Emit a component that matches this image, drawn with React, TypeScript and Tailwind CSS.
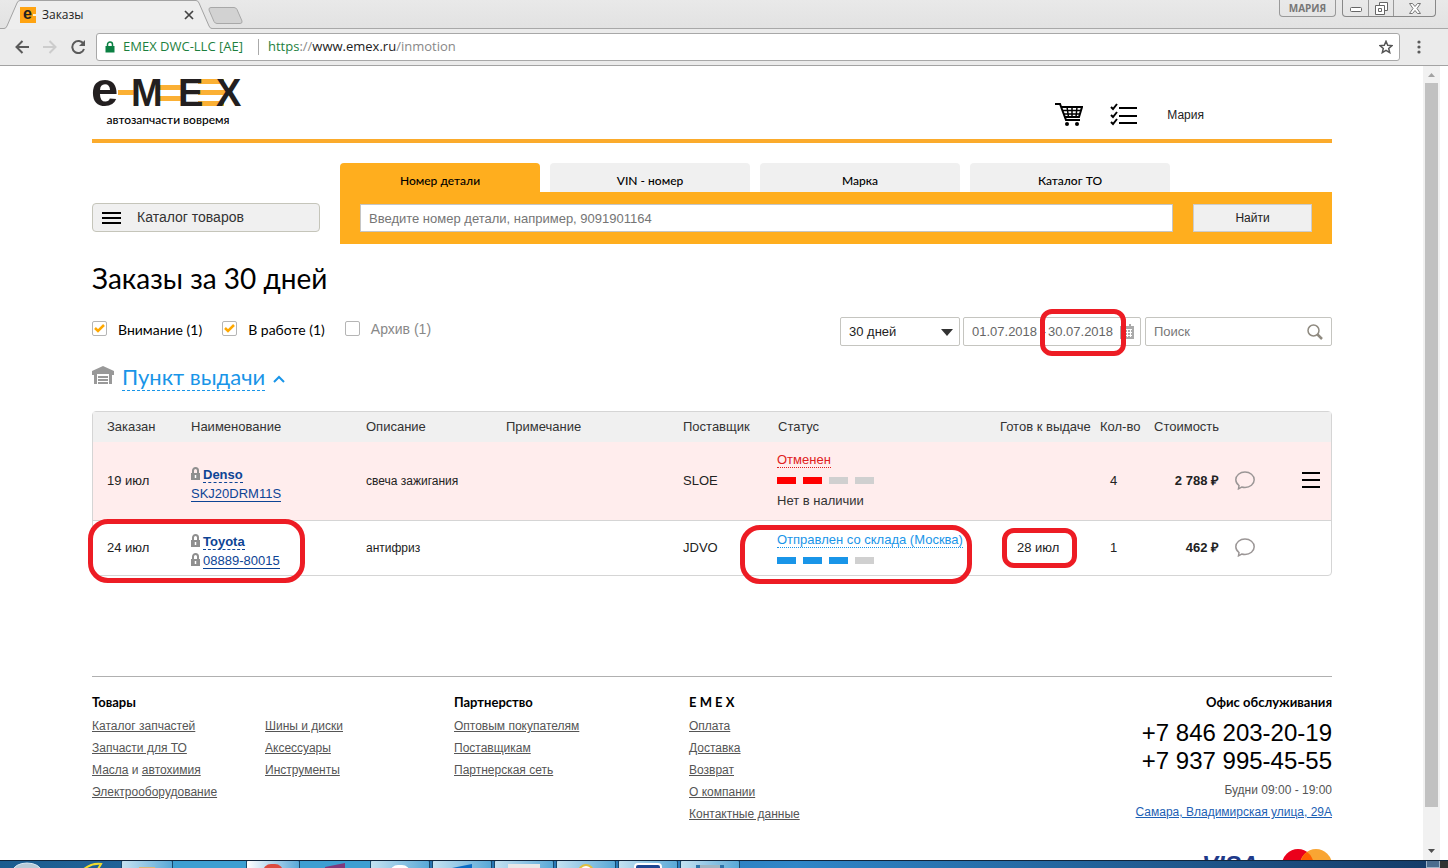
import type { ReactNode } from "react";

type Order = {
  date: string;
  brand: string;
  article: string;
  articleLocked: boolean;
  description: string;
  supplier: string;
  status: string;
  steps: number;
  comment?: string;
  canceled: boolean;
  ready: string;
  count: number;
  price: string;
};

const orders: Order[] = [
  {
    date: "19 июл",
    brand: "Denso",
    article: "SKJ20DRM11S",
    articleLocked: false,
    description: "свеча зажигания",
    supplier: "SLOE",
    status: "Отменен",
    steps: 2,
    comment: "Нет в наличии",
    canceled: true,
    ready: "",
    count: 4,
    price: "2 788 ₽",
  },
  {
    date: "24 июл",
    brand: "Toyota",
    article: "08889-80015",
    articleLocked: true,
    description: "антифриз",
    supplier: "JDVO",
    status: "Отправлен со склада (Москва)",
    steps: 3,
    canceled: false,
    ready: "28 июл",
    count: 1,
    price: "462 ₽",
  },
];

const marker =
  "pointer-events-none absolute border-[5px] border-[#ed1c24]";

function Tab() {
  return (
    <div className="relative flex h-[29px] w-[212px] items-center pl-5 pr-[18px]">
      <svg className="absolute inset-0" width="212" height="29" fill="none">
        <path d="M0 28.5H4Q6 28.5 7 26L17 3Q18 .5 20 .5H196Q198 .5 199 3L209 26Q210 28.5 212 28.5V29H0Z" fill="#eeeeee" />
        <path d="M0 28.5H4Q6 28.5 7 26L17 3Q18 .5 20 .5H196Q198 .5 199 3L209 26Q210 28.5 212 28.5" stroke="#a3a3a3" />
      </svg>
      <svg className="relative overflow-visible" width="16" height="16" viewBox="0 0 16 16">
        <rect width="16" height="16" fill="#ffa412" />
        <text x="3" y="12" fontFamily="Liberation Sans" fontWeight="bold" fontSize="16" fill="#222">e</text>
        <path d="M13 7h3v2h-3z" fill="#fff3d0" />
      </svg>
      <span className="relative ml-[6px] grow text-[12px] text-[#222]">Заказы</span>
      <button aria-label="Закрыть вкладку" className="relative">
        <svg width="10" height="10" viewBox="0 0 10 10" stroke="#444" strokeWidth="1.700">
          <path d="M1 1l8 8M9 1l-8 8" />
        </svg>
      </button>
    </div>
  );
}

function Browser() {
  return (
    <header className="shrink-0 bg-[#ebebeb] font-['Open_Sans','Noto_Sans',sans-serif]">
      <div className="flex h-[29px] items-start border-b border-[#a8a8a8] bg-linear-to-b from-[#e9e9e9] to-[#e2e2e2]">
        <Tab />
        <button aria-label="Новая вкладка" className="-ml-1 mt-[7px]">
          <svg width="36" height="17" fill="#d2d2d2" stroke="#a8a8a8">
            <path d="M3 .5H26Q28 .5 29 2.500L34 14Q34.500 16.500 32 16.500H9Q7 16.500 6 14.500L1 3Q.5.5 3 .5Z" />
          </svg>
        </button>
        <div className="ml-auto flex h-[17px] items-center text-[#666]">
          <button className="mr-[6px] h-[17px] w-[57px] rounded-b border border-t-0 border-[#999] text-[10px] font-bold leading-4 text-[#777]">
            МАРИЯ
          </button>
          <div className="mr-3 flex h-[17px] rounded-b border border-t-0 border-[#888]">
            <button aria-label="Свернуть" className="flex w-[25px] items-center justify-center">
              <svg width="12" height="10" fill="#fff" stroke="#666"><rect x=".5" y="4.500" width="11" height="4" rx="1" /></svg>
            </button>
            <button aria-label="Развернуть" className="flex w-[26px] items-center justify-center border-x border-[#999]">
              <svg width="13" height="13" fill="#fff" stroke="#666">
                <path d="M4.500.5h8v8h-8z" /><path d="M.5 3.500h9v9h-9z" /><path d="M3.500 6.500h3v3h-3z" />
              </svg>
            </button>
            <button aria-label="Закрыть" className="flex w-[41px] items-center justify-center">
              <svg width="12" height="11" fill="#fff" stroke="#777">
                <path d="M.5.5h3L6 3.500 8.500.5h3L8 5.500l3.500 5h-3L6 7.500l-2.500 3h-3l3.500-5z" />
              </svg>
            </button>
          </div>
        </div>
      </div>
      <div className="flex h-[37px] items-center border-b border-[#a3a3a3] pb-px">
        <div className="flex w-24 shrink-0 items-center gap-[14px] pl-[15px]">
          <button aria-label="Назад">
            <svg width="14" height="14" fill="none" stroke="#5a5a5a" strokeWidth="2"><path d="M14 7H1.500M7.500 1L1.500 7l6 6" /></svg>
          </button>
          <button aria-label="Вперед">
            <svg width="14" height="14" fill="none" stroke="#cccccc" strokeWidth="2"><path d="M0 7h12.500M6.500 1l6 6-6 6" /></svg>
          </button>
          <button aria-label="Обновить">
            <svg width="15" height="14" fill="none" stroke="#5a5a5a" strokeWidth="2">
              <path d="M12.500 4A6 6 0 1 0 13 9" /><path d="M14 0v6H8z" fill="#5a5a5a" stroke="none" />
            </svg>
          </button>
        </div>
        <div className="flex h-7 grow items-center rounded-[3px] border border-[#a8a8a8] bg-white pl-2 pr-1.5 text-[13px]">
          <svg width="10" height="12" fill="none" stroke="#0b8043" strokeWidth="1.500">
            <path d="M2.500 5V3.500a2.500 2.500 0 0 1 5 0V5" /><path d="M.5 5h9v6.500h-9z" fill="#0b8043" stroke="none" />
          </svg>
          <span className="ml-2 w-[126px] whitespace-nowrap text-[#1d7f3e]">EMEX DWC-LLC [AE]</span>
          <span className="mx-[9px] h-4 w-px bg-[#aaa]" />
          <span className="grow whitespace-nowrap text-[#888]">
            <span className="text-[#1d7f3e]">https</span>://<span className="text-[#222]">www.emex.ru</span>/inmotion
          </span>
          <button aria-label="Добавить в закладки">
            <svg width="14" height="14" viewBox="0 0 14 14" fill="none" stroke="#555" strokeWidth="1.500">
              <path d="M7 1.300l1.700 3.900 4.200.4-3.200 2.800 1 4.200L7 10.400l-3.700 2.200 1-4.200L1.100 5.600l4.200-.4z" />
            </svg>
          </button>
        </div>
        <button aria-label="Меню" className="flex w-12 shrink-0 justify-start pl-[17px]">
          <svg width="4" height="14" fill="#5a5a5a"><circle cx="2" cy="2" r="1.600" /><circle cx="2" cy="7" r="1.600" /><circle cx="2" cy="12" r="1.600" /></svg>
        </button>
      </div>
    </header>
  );
}

function Logo() {
  return (
    <a href="#" className="block w-[152px] pt-[13px] text-black">
      <svg className="overflow-visible" width="152" height="29" viewBox="0 0 152 29" fontFamily="Liberation Sans" fontWeight="bold" fill="#231f20">
        <path d="M26 11h18v5H26zM66 6h24v5H66zM66 17h24v5H66zM106 0h26v5h-26zM106 11h32v5h-32zM106 22h26v5h-26z" fill="#fbb034" />
        <text x="-1" y="27" fontSize="49">e</text>
        <text x="39" y="27" fontSize="38">M</text>
        <text x="86" y="27" fontSize="38">E</text>
        <text x="124" y="27" fontSize="38">X</text>
      </svg>
      <span className="mt-1 block text-center font-['Lato',sans-serif] text-[12px] font-medium leading-4">
        автозапчасти вовремя
      </span>
    </a>
  );
}

function SiteHeader() {
  return (
    <div className="flex h-[77px] border-b-4 border-[#fbab2c]">
      <Logo />
      <div className="ml-auto mr-32 flex items-center pt-6">
        <a href="#" aria-label="Корзина">
          <svg width="28" height="26" fill="none" stroke="#000" strokeWidth="2">
            <path d="M0 2h5l6 16h14" /><path d="M6 5h21l-3 10H9.500" /><path d="M7.500 8.500H26M9 12h16M12 5l1.500 10M17 5v10M22 5l-1 10" strokeWidth="1.500" />
            <circle cx="12" cy="22" r="2" fill="#000" stroke="none" /><circle cx="22" cy="22" r="2" fill="#000" stroke="none" />
          </svg>
        </a>
        <a href="#" aria-label="Список" className="ml-[27px]">
          <svg width="28" height="24" fill="none" stroke="#000" strokeWidth="2">
            <path d="M9 5h18M9 13h18M9 20h18" /><path d="M1 4l2 2 4-5M1 12l2 2 4-5M1 19l2 2 4-5" />
          </svg>
        </a>
        <a href="#" className="ml-[29px] text-[12px] text-[#222]">Мария</a>
      </div>
    </div>
  );
}

function PartSearch() {
  const tabs = ["Номер детали", "VIN - номер", "Марка", "Каталог ТО"];
  return (
    <div className="mt-5 flex items-end gap-5">
      <button className="mb-3 flex h-[29px] w-[228px] shrink-0 items-center gap-[15px] rounded border border-[#c5c5ba] bg-[#f0f0f0] pl-[9px] text-[14px] text-[#333]">
        <svg width="20" height="12" stroke="#000" strokeWidth="2"><path d="M0 1h19M0 6h19M0 11h19" /></svg>
        Каталог товаров
      </button>
      <div className="grow">
        <div className="flex gap-[10px] font-['Lato',sans-serif] text-[12px]">
          {tabs.map((tab, i) => (
            <button
              key={tab}
              className={`h-[29px] w-[200px] rounded-t pt-1.5 font-medium ${i === 0 ? "bg-[#ffae1e]" : "bg-[#f0f0f0]"}`}
            >
              {tab}
            </button>
          ))}
        </div>
        <form className="flex gap-5 bg-[#ffae1e] px-5 py-3">
          <input
            aria-label="Номер детали"
            placeholder="Введите номер детали, например, 9091901164"
            className="h-7 grow border border-[#c5c5c5] bg-white px-2 text-[13px] placeholder:text-[#757575]"
          />
          <button type="button" className="h-7 w-[119px] border border-[#ccc] bg-[#f0f0f0] text-[12px] text-[#222]">
            Найти
          </button>
        </form>
      </div>
    </div>
  );
}

function Check({ checked, children }: { checked: boolean; children: ReactNode }) {
  return (
    <label className={`flex items-center ${checked ? "font-['Lato',sans-serif] text-[14px]" : "text-[14px] text-[#888]"}`}>
      <span className="relative mr-[11px] mb-0.5 h-[15px] w-[15px]">
        <input
          type="checkbox"
          defaultChecked={checked}
          className="peer block h-[15px] w-[15px] appearance-none rounded-xs border border-[#b5b5b5] bg-white"
        />
        <svg className="pointer-events-none absolute inset-0 hidden peer-checked:block" width="15" height="15" fill="none" stroke="#ffa800" strokeWidth="2.500">
          <path d="M3 7l3 3 6-6" />
        </svg>
      </span>
      {children}
    </label>
  );
}

function Filters() {
  return (
    <div className="mt-5 flex items-center">
      <div className="flex gap-5 pb-1">
        <Check checked>Внимание (1)</Check>
        <Check checked>В работе (1)</Check>
        <Check checked={false}>Архив (1)</Check>
      </div>
      <div className="ml-auto flex text-[13px] text-[#666]">
        <div className="relative mr-[3px]">
          <select aria-label="Период" className="h-[29px] w-[120px] appearance-none rounded-xs border border-[#c5c5c0] bg-white pl-2 text-[#222]">
            <option>30 дней</option>
          </select>
          <svg className="pointer-events-none absolute right-[7px] top-3" width="12" height="7" fill="#333"><path d="M0 0h12L6 7z" /></svg>
        </div>
        <div className="relative mr-1 flex h-[29px] w-[178px] items-center rounded-xs border border-[#c5c5c0] pl-2">
          <input aria-label="Дата с" defaultValue="01.07.2018" className="w-[68px] bg-transparent" />
          <span className="w-2 text-center">-</span>
          <input aria-label="Дата по" defaultValue="30.07.2018" className="w-[68px] bg-transparent" />
          <svg className="ml-1" width="14" height="15" fill="#aaa">
            <path d="M0 2h14v13H0zM3 0h2v3H3zM9 0h2v3H9z" />
            <path d="M2 5.500h10M2 8.500h10M2 11.500h10M4.500 5v8M7.500 5v8M10.500 5v8" stroke="#fff" />
          </svg>
          <span className={`${marker} -top-[9px] left-[76px] h-[47px] w-[86px] rounded-xl`} />
        </div>
        <div className="flex h-[29px] w-[187px] items-center rounded-xs border border-[#c5c5c0] px-2">
          <input aria-label="Поиск" placeholder="Поиск" className="min-w-0 grow bg-transparent placeholder:text-[#777]" />
          <svg className="shrink-0" width="16" height="16" fill="none" stroke="#8f8a80" strokeWidth="1.500">
            <circle cx="6.500" cy="6.500" r="5.500" /><path d="M10.500 10.500l4.500 4.500" strokeWidth="2.500" />
          </svg>
        </div>
      </div>
    </div>
  );
}

function Lock() {
  return (
    <svg className="mr-[3px] inline-block align-[-1px]" width="9" height="13" fill="none" stroke="#8f8f8f" strokeWidth="2">
      <path d="M2 6V3.500a2.500 2.500 0 0 1 5 0V6" /><path d="M0 6h9v7H0z" fill="#8f8f8f" stroke="none" />
      <path d="M4.500 8v3" stroke="#fff" strokeWidth="1.500" />
    </svg>
  );
}

function OrderRow({ order }: { order: Order }) {
  const on = order.canceled ? "bg-[#ff0000]" : "bg-[#1995e8]";
  return (
    <tr className={order.canceled ? "h-[78px] bg-[#ffeded]" : "h-[55px] border-t border-[#d5d5d5]"}>
      <td className="relative pl-[14px]">
        {order.date}
        {!order.canceled && <span className={`${marker} -left-[5px] -top-[2px] z-10 h-[64px] w-[217px] rounded-[20px]`} />}
      </td>
      <td className="pl-[14px] pt-[6px] leading-[19px] text-[#0d4495]">
        <Lock />
        <a href="#" className="border-b border-dashed border-[#0d4495] font-bold">{order.brand}</a>
        <br />
        {order.articleLocked && <Lock />}
        <a href="#" className="border-b border-[#0d4495]">{order.article}</a>
      </td>
      <td className="pl-[14px] text-[12px]">{order.description}</td>
      <td />
      <td className="pl-[14px]">{order.supplier}</td>
      <td className={`relative pl-[13px] leading-5 ${order.canceled ? "" : "pt-[6px]"}`}>
        <a href="#" className={`border-b border-dotted ${order.canceled ? "border-[#e02020] text-[#e02020]" : "border-[#1995e8] text-[#1995e8]"}`}>
          {order.status}
        </a>
        <div className="my-[7px] flex gap-[7px] last:mb-0">
          {[0, 1, 2, 3].map((i) => (
            <span key={i} className={`h-[7px] w-[19px] ${i < order.steps ? on : "bg-[#d0d0d0]"}`} />
          ))}
        </div>
        {order.comment && <div className="text-[#333]">{order.comment}</div>}
        {!order.canceled && <span className={`${marker} -left-[24px] top-1 h-[59px] w-[232px] rounded-[20px]`} />}
      </td>
      <td className="relative pl-[31px]">
        {order.ready}
        {order.ready && <span className={`${marker} left-4 top-[7px] h-10 w-[75px] rounded-xl`} />}
      </td>
      <td className="pl-6">{order.count}</td>
      <td className="text-right font-bold">{order.price}</td>
      <td className="pl-4 pr-[11px]">
        <div className="flex items-center justify-between">
          <button aria-label="Комментарий">
            <svg width="20" height="19" fill="none" stroke="#9b9696" strokeWidth="1.500">
              <path d="M4 14.500C2 13 .8 11 .8 8.800.8 4.500 5 1 10 1s9.200 3.500 9.200 7.800-4.200 7.700-9.200 7.700c-1.300 0-2.300-.2-3.300-.5L3.500 17.800z" />
            </svg>
          </button>
          {order.canceled && (
            <button aria-label="Действия">
              <svg width="18" height="17" stroke="#000" strokeWidth="2"><path d="M0 1h18M0 8h18M0 15h18" /></svg>
            </button>
          )}
        </div>
      </td>
    </tr>
  );
}

function Orders() {
  return (
    <div className="mt-5 rounded border border-[#d5d5d5]">
      <table className="w-full table-fixed border-collapse text-[13px] text-[#222]">
        <colgroup>
          <col className="w-[84px]" />
          <col className="w-[175px]" />
          <col className="w-[140px]" />
          <col />
          <col className="w-[95px]" />
          <col className="w-[222px]" />
          <col className="w-[100px]" />
          <col className="w-[54px]" />
          <col className="w-[79px]" />
          <col className="w-[112px]" />
        </colgroup>
        <thead>
          <tr className="h-[30px] whitespace-nowrap bg-[#f0f0f0] text-left text-[#333] [&>th]:pl-[14px] [&>th]:font-normal">
            <th>Заказан</th>
            <th>Наименование</th>
            <th>Описание</th>
            <th>Примечание</th>
            <th>Поставщик</th>
            <th>Статус</th>
            <th>Готов к выдаче</th>
            <th>Кол-во</th>
            <th>Стоимость</th>
            <th />
          </tr>
        </thead>
        <tbody>
          {orders.map((order) => (
            <OrderRow key={order.article} order={order} />
          ))}
        </tbody>
      </table>
    </div>
  );
}

function LinkColumn({ title, links, className }: { title: string; links: string[]; className: string }) {
  return (
    <div className={className}>
      <h3 className="h-6 font-['Lato',sans-serif] text-[13px] font-bold leading-[22px] text-black">{title}</h3>
      {links.map((link) => (
        <div key={link}>
          {link === "Масла и автохимия" ? (
            <>
              <a href="#" className="underline">Масла</a> и <a href="#" className="underline">автохимия</a>
            </>
          ) : (
            <a href="#" className="underline">{link}</a>
          )}
        </div>
      ))}
    </div>
  );
}

function Footer() {
  return (
    <footer className="mt-[100px] border-t border-[#b0b0b0] pt-[14px] text-[12px] leading-[22px] text-[#555]">
      <div className="flex">
        <LinkColumn className="w-[173px]" title="Товары" links={["Каталог запчастей", "Запчасти для ТО", "Масла и автохимия", "Электрооборудование"]} />
        <LinkColumn className="w-[189px]" title="" links={["Шины и диски", "Аксессуары", "Инструменты"]} />
        <LinkColumn className="w-[235px]" title="Партнерство" links={["Оптовым покупателям", "Поставщикам", "Партнерская сеть"]} />
        <LinkColumn className="w-[200px]" title="E M E X" links={["Оплата", "Доставка", "Возврат", "О компании", "Контактные данные"]} />
        <div className="ml-auto text-right">
          <h3 className="h-6 font-['Lato',sans-serif] text-[13px] font-bold leading-[22px] text-black">Офис обслуживания</h3>
          <p className="mt-1 text-[24px] leading-7 text-black">+7 846 203-20-19</p>
          <p className="text-[24px] leading-7 text-black">+7 937 995-45-55</p>
          <p className="mt-1">Будни 09:00 - 19:00</p>
          <a href="#" className="text-[#1d5fb4] underline">Самара, Владимирская улица, 29А</a>
        </div>
      </div>
      <div className="mt-6 flex justify-end gap-6">
        <span className="text-[24px] font-bold italic leading-8 text-[#1f3a8a]">VISA</span>
        <svg width="50" height="32">
          <circle cx="16" cy="16" r="16" fill="#eb001b" />
          <circle cx="34" cy="16" r="16" fill="#f9a533" />
          <path d="M25 3a16 16 0 0 1 0 26 16 16 0 0 1 0-26" fill="#ff5f00" />
        </svg>
      </div>
    </footer>
  );
}

function Scrollbar() {
  return (
    <div className="flex w-[25px] shrink-0 flex-col bg-linear-to-r from-[#f1f1f1] from-[17px] to-white to-[17px]">
      <div className="flex h-[17px] w-[17px] items-center justify-center">
        <svg width="7" height="4" fill="#a3a3a3"><path d="M0 4L3.500 0 7 4z" /></svg>
      </div>
      <div className="ml-[2px] w-[13px] grow bg-[#c1c1c1]" />
      <div className="flex h-[53px] w-[17px] items-end justify-center pb-[7px]">
        <svg width="7" height="4" fill="#505050"><path d="M0 0l3.500 4L7 0z" /></svg>
      </div>
    </div>
  );
}

const taskButton =
  "flex justify-center overflow-hidden rounded-t-xs border border-b-0 border-[#17486b] bg-linear-to-r from-[#c4e2f1] to-[#58a9d7] h-2";

function Taskbar() {
  return (
    <nav className="flex h-2 shrink-0 items-end overflow-hidden border-t border-[#10243a] bg-linear-to-r from-[#1c5c8f] via-[#2f86c8] via-55% to-[#143a66]">
      <div className="flex w-[121px]">
        <svg width="121" height="7">
          <ellipse cx="27" cy="10" rx="14" ry="8" fill="#b9cad6" stroke="#d9e9f3" />
          <path d="M84 8q8-6 17-5l-3 5" fill="none" stroke="#f2dc2c" strokeWidth="2" />
        </svg>
      </div>
      <div className={`${taskButton} w-[52px]`}><span className="mt-1.5 h-1 w-4 bg-[#d8b87a]" /></div>
      <div className="h-2 w-[73px] bg-[#3c9fd2]" />
      <div className={`${taskButton} w-[54px] from-white`}><span className="mt-[3px] h-4 w-5 rounded-full bg-[#dd4b3e]" /></div>
      <div className="flex h-2 w-[70px] justify-center bg-[#3c9fd2]">
        <svg width="20" height="8" fill="#80397b"><path d="M0 7L20 3v5H0z" /></svg>
      </div>
      <div className={`${taskButton} w-[60px]`}><span className="mt-1 h-4 w-5 rounded-full bg-white" /></div>
      <div className={`${taskButton} ml-0.5 w-[60px]`}>
        <svg width="20" height="8" fill="#0a6cc4"><path d="M0 7L20 3v5H0z" /></svg>
      </div>
      <div className={`${taskButton} ml-0.5 w-[60px]`}><span className="mt-[3px] h-2 w-8 bg-[#e8e8e8]" /></div>
      <div className={`${taskButton} ml-0.5 w-[60px]`}><span className="mt-[3px] h-4 w-4 rounded-full border-2 border-[#e0c040] bg-white" /></div>
      <div className={`${taskButton} ml-0.5 w-[60px]`}><span className="mt-[2px] h-4 w-7 rounded border-2 border-white bg-[#1c4591]" /></div>
      <div className={`${taskButton} ml-0.5 w-[60px]`}><span className="mt-1 h-4 w-7 border-x-4 border-[#2d73a8] bg-[#9fb6c4]" /></div>
      <div className="ml-auto flex h-2 w-[22px] justify-between bg-[#333]">
        <span className="h-2 w-[14px] border border-[#9fb4c8] bg-[#4a6c8e]" />
      </div>
    </nav>
  );
}

function App() {
  return (
    <div className="flex h-screen flex-col overflow-hidden bg-white font-['Liberation_Sans',Arial,sans-serif] text-black">
      <Browser />
      <div className="flex min-h-0 grow">
        <main className="min-w-0 grow overflow-hidden pl-[92px] pr-[91px]">
          <SiteHeader />
          <PartSearch />
          <h1 className="mt-4 font-['Lato',sans-serif] text-[28px] leading-[37px]">Заказы за 30 дней</h1>
          <Filters />
          <h2 className="mt-[17px] flex items-start font-['Lato',sans-serif] text-[22px] leading-[27px] text-[#1995e8]">
            <svg className="mt-[3px] mr-2" width="22" height="18" fill="#999">
              <path d="M11 0l11 5v4h-2v9h-3V8H5v10H2V9H0V5z" /><path d="M6 10h10v2H6zM6 13h10v2H6zM6 16h10v2H6z" />
            </svg>
            <a href="#" className="block border-b border-dashed border-[#1995e8]">Пункт выдачи</a>
            <svg className="mt-3 ml-2" width="12" height="8" fill="none" stroke="#1995e8" strokeWidth="2"><path d="M1 7l5-5 5 5" /></svg>
          </h2>
          <Orders />
          <Footer />
        </main>
        <Scrollbar />
      </div>
      <Taskbar />
    </div>
  );
}

export default App;
